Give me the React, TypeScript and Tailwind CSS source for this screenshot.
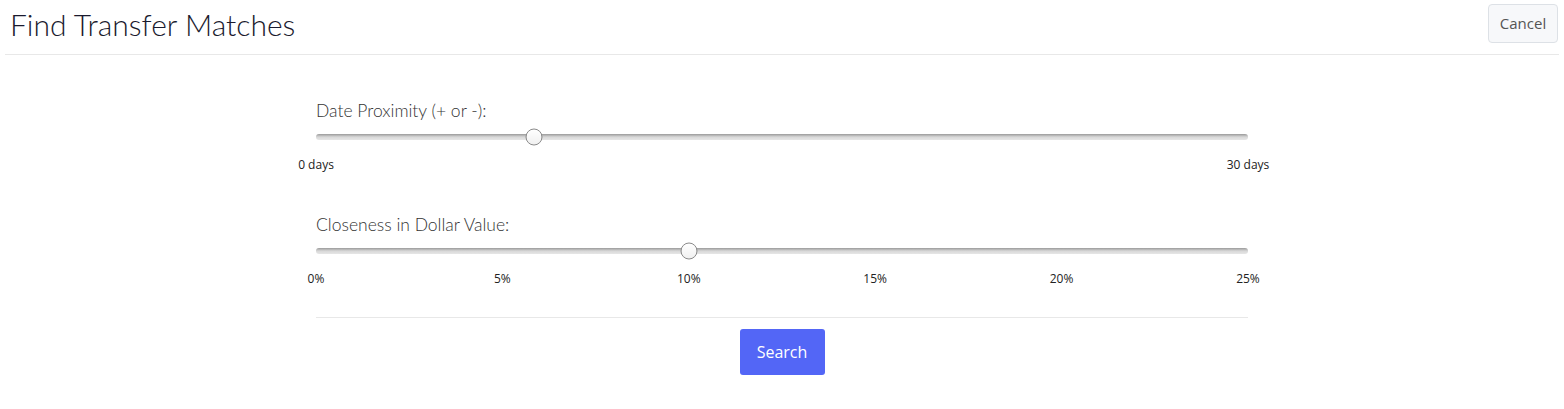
const dateTicks = ["0 days", "30 days"];
const dollarTicks = ["0%", "5%", "10%", "15%", "20%", "25%"];

type SliderProps = {
  label: string;
  percent: number;
  ticks: string[];
};

const Slider = ({ label, percent, ticks }: SliderProps) => {
  return (
    <div>
      <div className="text-[17.5px] leading-6 text-[#333] font-light [font-family:Lato,sans-serif]">
        {label}
      </div>
      <div className="relative mt-[11px] h-[6px] rounded-full bg-gradient-to-b from-[#9a9a9a] via-[#d8d8d8] to-[#e6e6e6]">
        <div
          className="absolute top-1/2 h-[17px] w-[17px] -translate-x-1/2 -translate-y-1/2 rounded-full border border-[#8a8a8a] bg-gradient-to-b from-white to-[#f0f0f0]"
          style={{ left: `${percent}%` }}
        />
      </div>
      <div className="mt-[17px] flex justify-between">
        {ticks.map((t) => (
          <div key={t} className="flex w-0 justify-center">
            <span className="whitespace-nowrap text-[12px] leading-4 text-[#222] [font-family:'Open_Sans',sans-serif]">
              {t}
            </span>
          </div>
        ))}
      </div>
    </div>
  );
};

export default function App() {
  return (
    <div className="h-[409px] w-full bg-white">
      <div className="mx-[5px] flex items-start justify-between border-b border-[#e8e8e8] pb-[11px]">
        <h1 className="mt-[6px] pl-[5px] text-[30px] font-light leading-9 text-[#1a1a2e] [font-family:Lato,sans-serif]">
          Find Transfer Matches
        </h1>
        <button className="mr-[1px] mt-[4px] h-[39px] w-[70px] rounded border border-[#dde1e6] bg-[#f7f8fa] text-[15px] text-[#555] [font-family:'Open_Sans',sans-serif]">
          Cancel
        </button>
      </div>

      <div className="mx-auto mt-[44px] w-[932px]">
        <Slider label="Date Proximity (+ or -):" percent={23.4} ticks={dateTicks} />
        <div className="mt-[40px]">
          <Slider label="Closeness in Dollar Value:" percent={40} ticks={dollarTicks} />
        </div>
        <div className="mt-[30px] border-t border-[#e8e8e8]" />
        <div className="mt-[11px] flex justify-center">
          <button className="h-[46px] w-[85px] rounded-[3px] bg-[#5366f6] text-[16px] text-white [font-family:'Open_Sans',sans-serif]">
            Search
          </button>
        </div>
      </div>
    </div>
  );
}
